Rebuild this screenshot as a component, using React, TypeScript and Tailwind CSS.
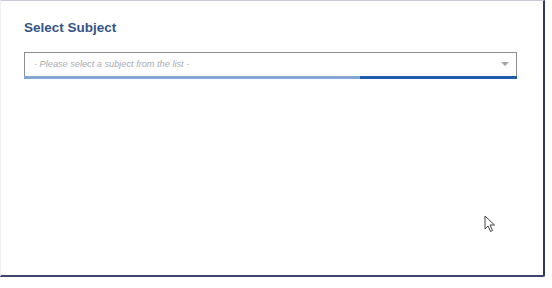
export default function App() {
  return (
    <div className="w-[552px] h-[288px] bg-white" style={{ fontFamily: '"Liberation Sans", Arial, sans-serif' }}>
      <div className="relative w-[545px] h-[277px] bg-white border-t border-t-[#c9ccd6] border-l border-l-[#eef0f4] border-r-2 border-r-[#2e3a66] border-b-2 border-b-[#3a4570] rounded-br-[2px]">
        <div className="pl-[23px] pt-[19px] pr-[27px]">
          <h2 className="text-[13.5px] font-bold text-[#35548a] leading-[16px]">Select Subject</h2>
          <div className="mt-[16px] w-[493px]">
            <div className="flex items-center h-[24px] border border-[#8c8f96] border-b-0 bg-white pl-[9px] pr-[6px]">
              <span className="flex-1 text-[9.2px] italic text-[#a9acb2]">- Please select a subject from the list -</span>
              <svg width="8" height="5" viewBox="0 0 8 5" className="mr-[1px]">
                <path d="M0 0 L8 0 L4 4 Z" fill="#a0a3a8" />
              </svg>
            </div>
            <div className="flex h-[3px]">
              <div className="w-[336px] bg-[#84a6d4]" />
              <div className="flex-1 bg-[#1e5cb0]" />
            </div>
          </div>
        </div>
        <svg className="absolute left-[483px] top-[214px]" width="12" height="18" viewBox="0 0 12 18">
          <path d="M1 1 L1 14 L4 11 L6.5 16.5 L8.5 15.5 L6 10 L10.5 10 Z" fill="white" stroke="#444" strokeWidth="1" strokeLinejoin="round" />
        </svg>
      </div>
    </div>
  );
}
